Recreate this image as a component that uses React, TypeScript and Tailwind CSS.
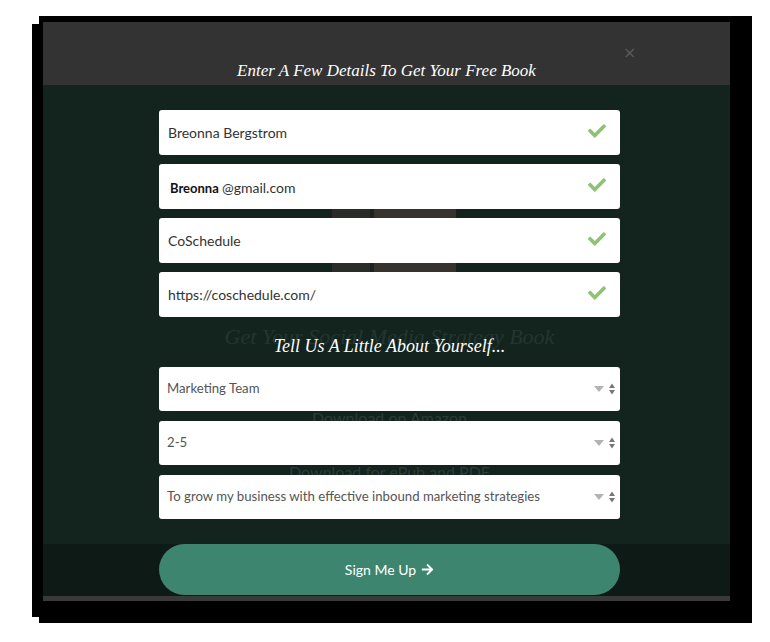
import { FaCheck, FaArrowRight } from "react-icons/fa";

const fields = [
  { value: "Breonna Bergstrom" },
  { value: "@gmail.com", bold: "Breonna" },
  { value: "CoSchedule" },
  { value: "https://coschedule.com/" },
];

const selects = [
  "Marketing Team",
  "2-5",
  "To grow my business with effective inbound marketing strategies",
];

// little native-looking select arrows
const SelectArrows = () => (
  <div className="flex items-center gap-[5px]">
    <svg width="10" height="6" viewBox="0 0 10 6">
      <path d="M0 0 L10 0 L5 6 Z" fill="#b3b3b3" />
    </svg>
    <svg width="6" height="12" viewBox="0 0 6 12">
      <path d="M0 5 L3 0.5 L6 5 Z" fill="#777" />
      <path d="M0 7 L3 11.5 L6 7 Z" fill="#777" />
    </svg>
  </div>
);

const App = () => {
  return (
    <div className="w-[770px] h-[642px] bg-white overflow-hidden font-['Lato',sans-serif]">
      {/* black shadow frame */}
      <div className="ml-[32px] mt-[16px] w-[720px] h-[607px] bg-black pl-[11px] pt-[6px] [clip-path:polygon(7px_0,100%_0,100%_100%,7px_100%,7px_calc(100%-6px),0_calc(100%-6px),0_8px,7px_8px)]">
        <div className="w-[687px] h-[579px] flex flex-col">
          {/* header */}
          <div className="relative h-[63px] bg-[#333333] pt-[38px]">
            <span className="absolute left-[580px] top-[23px] text-[#5a5a5a] text-[16px] leading-none font-['DejaVu_Sans',sans-serif]">
              ×
            </span>
            <p className="text-center text-white italic text-[17px] leading-[22px] font-['Liberation_Serif',serif]">
              Enter A Few Details To Get Your Free Book
            </p>
          </div>

          {/* body */}
          <div className="relative h-[459px] bg-[#13241f] pt-[25px]">
            {/* dimmed page behind the modal */}
            <div className="absolute inset-0 pointer-events-none flex flex-col items-center">
              <div className="mt-[110px] ml-[14px] w-[124px] h-[105px] flex">
                <div className="w-[38px] h-full bg-[#2a2c29]" />
                <div className="w-[4px] h-full bg-[#1d221f]" />
                <div className="flex-1 h-full bg-[#36322d]" />
              </div>
              <p className="mt-[24px] ml-[6px] text-[22px] leading-[26px] italic text-[#24352f] font-['Liberation_Serif',serif]">
                Get Your Social Media Strategy Book
              </p>
              <p className="mt-[53px] ml-[6px] text-[16px] leading-[30px] text-[#2c3c37]">
                Download on Amazon
              </p>
              <p className="mt-[27px] ml-[6px] text-[16px] leading-[24px] text-[#2c3c37]">
                Download for ePub and PDF
              </p>
            </div>

            <div className="relative ml-[116px] w-[461px] flex flex-col">
              <div className="flex flex-col gap-[9px]">
                {fields.map((f, i) => (
                  <div
                    key={i}
                    className="h-[45px] bg-white rounded-[3px] flex items-center justify-between pl-[9px] pr-[14px]"
                  >
                    <span className={`text-[14px] text-[#333] ${f.bold ? "pl-[2px] pt-[3px]" : ""}`}>
                      {f.bold && <b className="font-bold text-[#111] text-[13px]">{f.bold} </b>}
                      {f.value}
                    </span>
                    <FaCheck className="text-[#8cc474] w-[18px] h-[18px] -mt-[4px]" />
                  </div>
                ))}
              </div>

              <p className="h-[50px] pt-[8px] flex items-center justify-center text-white italic text-[18px] leading-[22px] font-['Liberation_Serif',serif]">
                Tell Us A Little About Yourself...
              </p>

              <div className="flex flex-col gap-[10px]">
                {selects.map((s, i) => (
                  <div
                    key={i}
                    className="h-[44px] bg-white rounded-[3px] flex items-center justify-between pl-[8px] pr-[5px]"
                  >
                    <span className="text-[13.2px] text-[#555]">{s}</span>
                    <SelectArrows />
                  </div>
                ))}
              </div>
            </div>
          </div>

          {/* footer */}
          <div className="h-[52px] bg-[#0e1a16]">
            <button className="ml-[116px] w-[461px] h-[51px] rounded-full bg-[#3e8570] text-white text-[14px] flex items-center justify-center gap-[5px]">
              Sign Me Up
              <FaArrowRight className="w-[13px] h-[13px]" />
            </button>
          </div>
          <div className="h-[5px] bg-[#3a3a3a]" />
        </div>
      </div>
    </div>
  );
};

export default App;
